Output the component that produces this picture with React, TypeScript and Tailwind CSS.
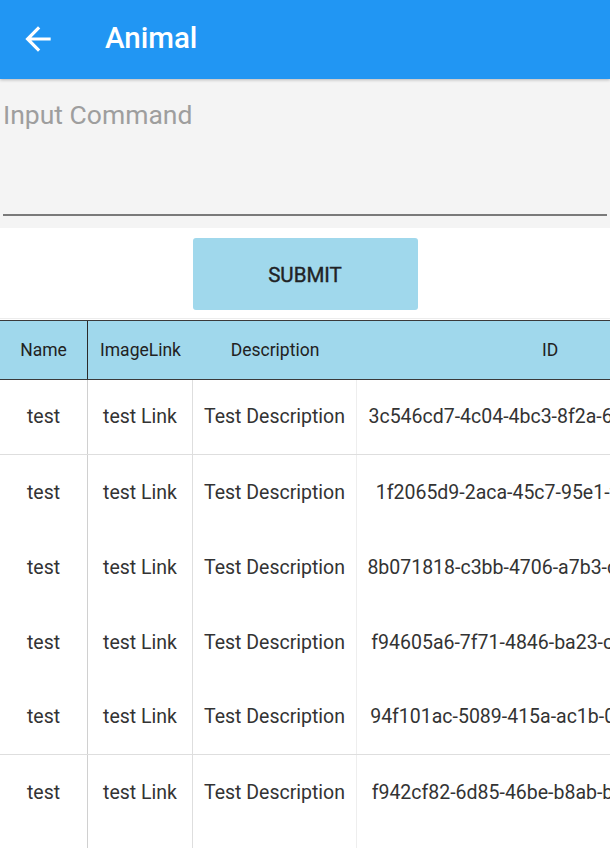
const rows = [
  { id: "3c546cd7-4c04-4bc3-8f2a-6e1d9a3b7c20", line: true },
  { id: "1f2065d9-2aca-45c7-95e1-f4a7c1b2d3e", line: false },
  { id: "8b071818-c3bb-4706-a7b3-c9e2f05d1a64", line: false },
  { id: "f94605a6-7f71-4846-ba23-c8d1e4f2a07b", line: false },
  { id: "94f101ac-5089-415a-ac1b-0d3e8f6a2c91", line: true },
  { id: "f942cf82-6d85-46be-b8ab-b2c7d9e1f350", line: false },
  { id: "a71c3e05-9b42-4d1f-8e6a-3f0b2c7d5e19", line: false },
];

function BackArrow() {
  return (
    <svg viewBox="0 0 24 24" className="w-[38px] h-[38px]" fill="white">
      <path d="M20 11H7.83l5.59-5.59L12 4l-8 8 8 8 1.41-1.41L7.83 13H20v-2z" />
    </svg>
  );
}

export default function App() {
  return (
    <div className="w-[610px] h-[848px] overflow-hidden bg-white font-['Roboto','Liberation_Sans',sans-serif]">
      <header className="h-[79px] bg-[#2196f3] flex items-center shadow-[0_1px_3px_rgba(0,0,0,0.25)] relative z-10">
        <div className="ml-[19px] mt-[-2px]">
          <BackArrow />
        </div>
        <h1 className="ml-[48px] text-[29.5px] font-medium text-white mt-[-2px]">Animal</h1>
      </header>

      <div className="h-[149px] bg-[#f4f4f4] px-[3px] pt-[18px] flex flex-col">
        <div className="text-[26.5px] text-[#9e9e9e] leading-[36px]">Input Command</div>
        <div className="mt-auto mb-[12px] h-[2px] bg-[#7a7a7a]" />
      </div>

      <div className="flex justify-center pt-[10px]">
        <button className="w-[225px] h-[72px] rounded-[3px] bg-[#a0d8ec] text-[20.5px] font-normal text-[#1f2326] [-webkit-text-stroke:0.4px_#1f2326] pt-[2px]">
          SUBMIT
        </button>
      </div>

      <div className="mt-[8px] border-t border-[#ececec] pt-[1px]">
        <div className="w-[743px] text-[#333]">
          <div className="flex h-[60px] bg-[#a0d8ec] border-t border-b border-[#3a3a3a] text-[17.5px] text-[#222]">
            <div className="w-[88px] flex items-center justify-center border-r border-[#2a2a2a]">Name</div>
            <div className="w-[105px] flex items-center justify-center">ImageLink</div>
            <div className="w-[164px] flex items-center justify-center">Description</div>
            <div className="w-[386px] flex items-center justify-center">ID</div>
          </div>
          {rows.map((r, i) => (
            <div
              key={i}
              className={`flex h-[75px] text-[19.5px] ${r.line ? "border-b border-[#dedede]" : ""}`}
            >
              <div className="w-[88px] flex items-center justify-center border-r border-[#d0d0d0]">test</div>
              <div className="w-[105px] flex items-center justify-center border-r border-[#dedede]">test Link</div>
              <div className="w-[164px] flex items-center justify-center border-r border-[#eeeeee]">Test Description</div>
              <div className="w-[386px] flex items-center justify-center whitespace-nowrap">{r.id}</div>
            </div>
          ))}
        </div>
      </div>
    </div>
  );
}
